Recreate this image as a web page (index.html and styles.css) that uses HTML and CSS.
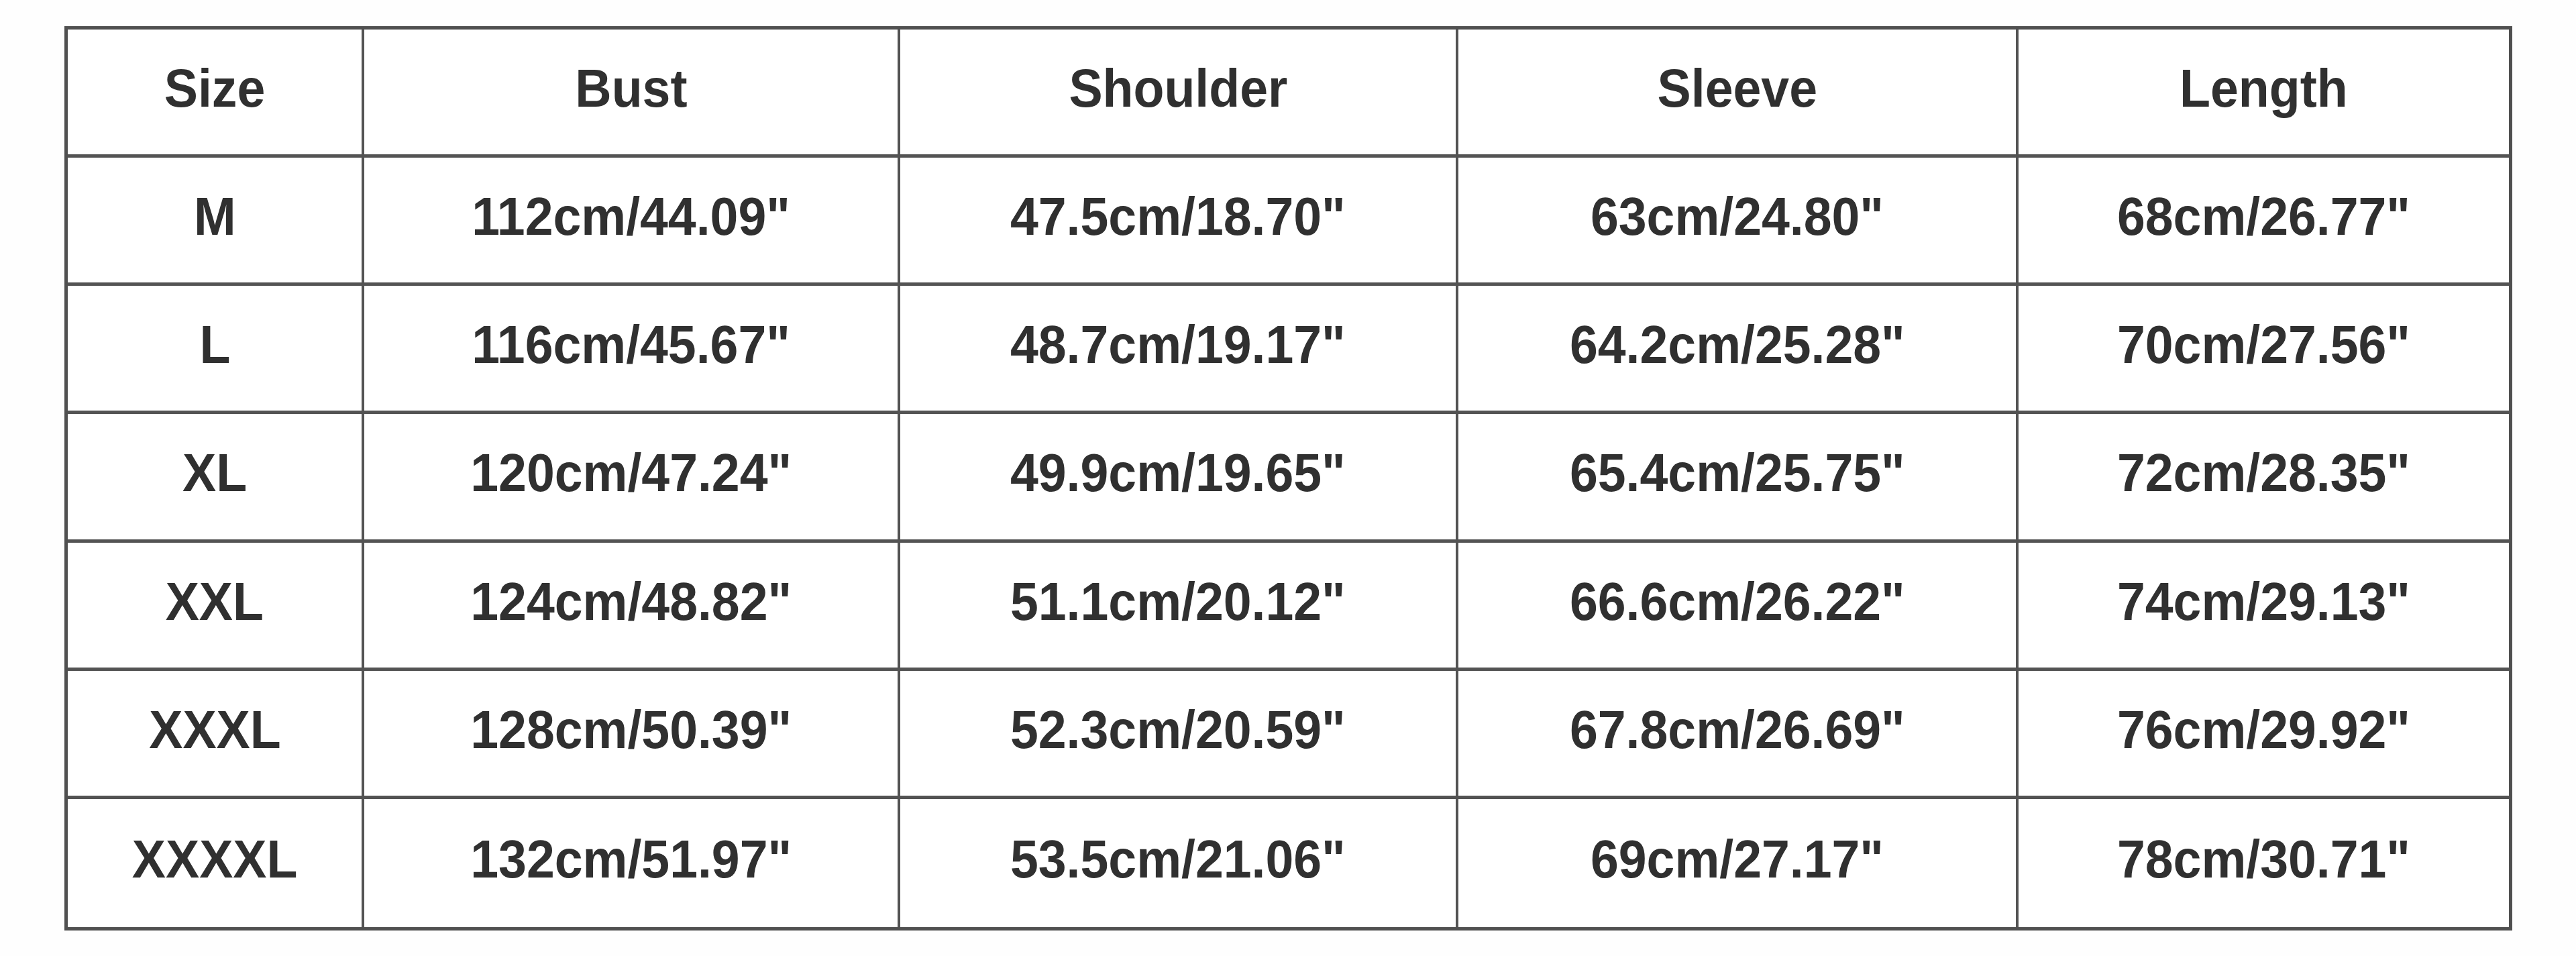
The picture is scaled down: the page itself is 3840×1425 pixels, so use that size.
FILE: index.html
```html
<!DOCTYPE html>
<html lang="en">
<head>
<meta charset="utf-8">
<title>Size Chart</title>
<link rel="stylesheet" href="styles.css">
</head>
<body>
<div class="page">
  <div class="chart">
    <div class="cell head"><span class="t">Size</span></div>
    <div class="cell head"><span class="t">Bust</span></div>
    <div class="cell head"><span class="t">Shoulder</span></div>
    <div class="cell head"><span class="t">Sleeve</span></div>
    <div class="cell head last-col"><span class="t">Length</span></div>

    <div class="cell"><span class="t">M</span></div>
    <div class="cell"><span class="t">112cm/44.09"</span></div>
    <div class="cell"><span class="t">47.5cm/18.70"</span></div>
    <div class="cell"><span class="t">63cm/24.80"</span></div>
    <div class="cell last-col"><span class="t">68cm/26.77"</span></div>

    <div class="cell"><span class="t">L</span></div>
    <div class="cell"><span class="t">116cm/45.67"</span></div>
    <div class="cell"><span class="t">48.7cm/19.17"</span></div>
    <div class="cell"><span class="t">64.2cm/25.28"</span></div>
    <div class="cell last-col"><span class="t">70cm/27.56"</span></div>

    <div class="cell"><span class="t">XL</span></div>
    <div class="cell"><span class="t">120cm/47.24"</span></div>
    <div class="cell"><span class="t">49.9cm/19.65"</span></div>
    <div class="cell"><span class="t">65.4cm/25.75"</span></div>
    <div class="cell last-col"><span class="t">72cm/28.35"</span></div>

    <div class="cell"><span class="t">XXL</span></div>
    <div class="cell"><span class="t">124cm/48.82"</span></div>
    <div class="cell"><span class="t">51.1cm/20.12"</span></div>
    <div class="cell"><span class="t">66.6cm/26.22"</span></div>
    <div class="cell last-col"><span class="t">74cm/29.13"</span></div>

    <div class="cell"><span class="t">XXXL</span></div>
    <div class="cell"><span class="t">128cm/50.39"</span></div>
    <div class="cell"><span class="t">52.3cm/20.59"</span></div>
    <div class="cell"><span class="t">67.8cm/26.69"</span></div>
    <div class="cell last-col"><span class="t">76cm/29.92"</span></div>

    <div class="cell last-row"><span class="t">XXXXL</span></div>
    <div class="cell last-row"><span class="t">132cm/51.97"</span></div>
    <div class="cell last-row"><span class="t">53.5cm/21.06"</span></div>
    <div class="cell last-row"><span class="t">69cm/27.17"</span></div>
    <div class="cell last-row last-col"><span class="t">78cm/30.71"</span></div>
  </div>
</div>
</body>
</html>
```

FILE: styles.css
```css
html, body {
  margin: 0;
  padding: 0;
  background: #ffffff;
}

.page {
  width: 3840px;
  height: 1425px;
  box-sizing: border-box;
  padding: 39px 0 0 96px;
  background: #fefefe;
}

.chart {
  display: grid;
  grid-template-columns: 442px 799px 832px 835px 731px;
  grid-template-rows: repeat(7, 1fr);
  width: 3639px;
  height: 1338px;
  border: 5px solid #505050;
  background: #ffffff;
}

.cell {
  display: flex;
  align-items: center;
  justify-content: center;
  box-sizing: border-box;
  padding-bottom: 10px;
  border-right: 4px solid #535353;
  border-bottom: 5px solid #535353;
  font-family: "Liberation Sans", Arial, sans-serif;
  font-weight: bold;
  font-size: 80px;
  line-height: 1;
  color: #303030;
  white-space: nowrap;
}

.cell.last-col {
  border-right: none;
}

.cell.last-row {
  border-bottom: none;
}

.t {
  display: inline-block;
  transform: scaleX(0.94);
}
```
